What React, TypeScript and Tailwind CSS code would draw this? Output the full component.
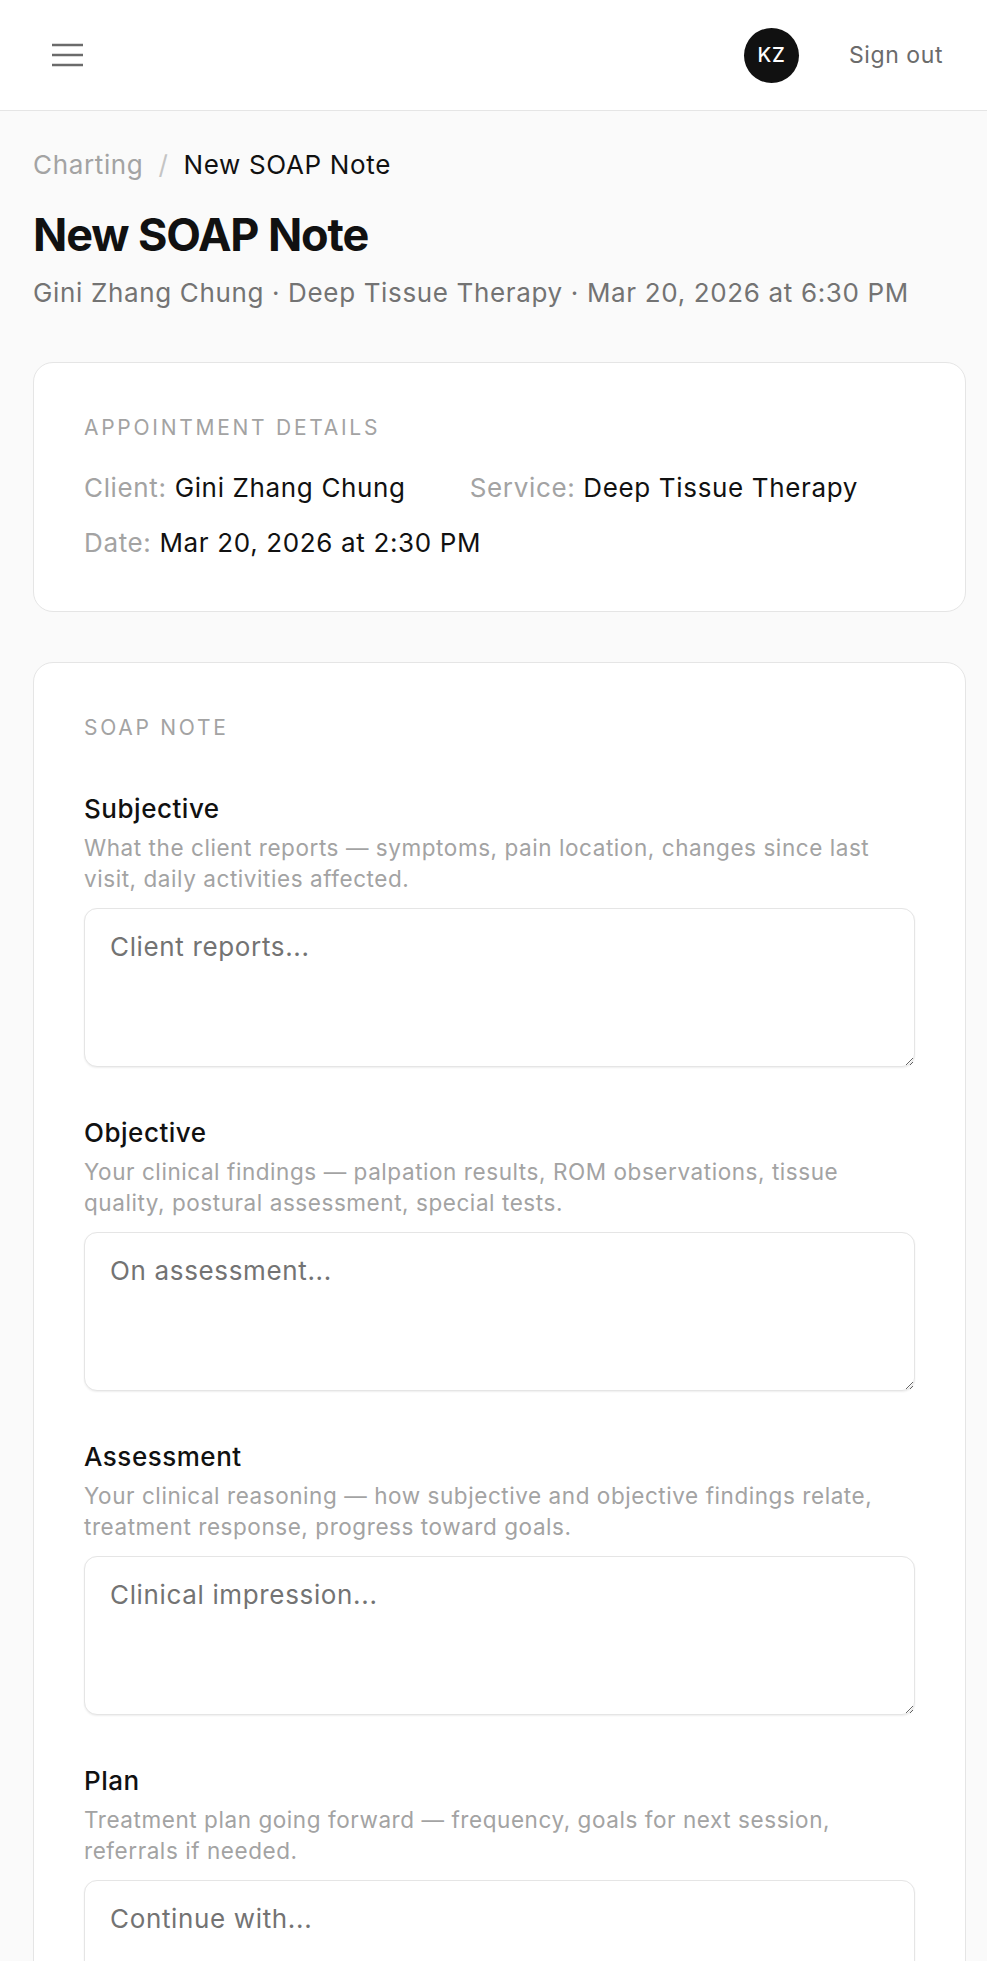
import React from 'react';

const sections = [
  {
    title: 'Subjective',
    hint: 'What the client reports — symptoms, pain location, changes since last visit, daily activities affected.',
    placeholder: 'Client reports...',
  },
  {
    title: 'Objective',
    hint: 'Your clinical findings — palpation results, ROM observations, tissue quality, postural assessment, special tests.',
    placeholder: 'On assessment...',
  },
  {
    title: 'Assessment',
    hint: 'Your clinical reasoning — how subjective and objective findings relate, treatment response, progress toward goals.',
    placeholder: 'Clinical impression...',
  },
  {
    title: 'Plan',
    hint: 'Treatment plan going forward — frequency, goals for next session, referrals if needed.',
    placeholder: 'Continue with...',
  },
];

function MenuIcon() {
  return (
    <svg width="31" height="24" viewBox="0 0 31 24" fill="none" stroke="#6b6b6b" strokeWidth="2.5">
      <path d="M0 2h31M0 12h31M0 22h31" />
    </svg>
  );
}

function Detail({ label, value }: { label: string; value: string }) {
  return (
    <p className="text-[26px] leading-[32px] tracking-[0.025em]">
      <span className="text-[#a3a3a3]">{label}</span>{' '}
      <span className="text-[#111111]">{value}</span>
    </p>
  );
}

export default function App() {
  return (
    <div className="min-h-screen bg-[#fafafa] font-['Inter',sans-serif] antialiased">
      <header className="flex h-[111px] items-center justify-between border-b border-[#e5e5e5] bg-white pl-[52px] pr-[44px]">
        <button className="flex items-center">
          <MenuIcon />
        </button>
        <div className="flex items-center gap-[50px]">
          <div className="flex h-[55px] w-[55px] items-center justify-center rounded-full bg-[#111111] text-[20px] font-medium tracking-[0.03em] text-white">
            KZ
          </div>
          <span className="text-[23px] tracking-[0.025em] text-[#6b6b6b]">Sign out</span>
        </div>
      </header>

      <main className="pl-[33px] pr-[21px] pt-[38px] pb-[60px]">
        <nav className="flex items-center gap-[15px] text-[26px] leading-[32px] tracking-[0.025em]">
          <span className="text-[#a3a3a3]">Charting</span>
          <span className="text-[#c4c4c4]">/</span>
          <span className="text-[#111111]">New SOAP Note</span>
        </nav>
        <h1 className="mt-[27px] text-[45px] font-bold leading-[54px] tracking-[-0.025em] text-[#111111]">
          New SOAP Note
        </h1>
        <p className="mt-[15px] text-[26px] leading-[32px] tracking-[0.025em] text-[#737373]">
          Gini Zhang Chung · Deep Tissue Therapy · Mar 20, 2026 at 6:30 PM
        </p>

        <section className="mt-[53px] rounded-[20px] border border-[#e5e5e5] bg-white px-[50px] pt-[50px] pb-[52px]">
          <h2 className="text-[21px] leading-[30px] tracking-[0.13em] text-[#a3a3a3]">APPOINTMENT DETAILS</h2>
          <div className="mt-[29px] flex flex-wrap gap-x-[64px] gap-y-[23px]">
            <Detail label="Client:" value="Gini Zhang Chung" />
            <Detail label="Service:" value="Deep Tissue Therapy" />
            <Detail label="Date:" value="Mar 20, 2026 at 2:30 PM" />
          </div>
        </section>

        <section className="mt-[50px] rounded-[20px] border border-[#e5e5e5] bg-white px-[50px] pt-[50px] pb-[50px]">
          <h2 className="text-[21px] leading-[30px] tracking-[0.13em] text-[#a3a3a3]">SOAP NOTE</h2>
          <div className="mt-[50px] flex flex-col gap-[50px]">
            {sections.map((s) => (
              <label key={s.title} className="block">
                <span className="block text-[26px] font-medium leading-[32px] tracking-[0.02em] text-[#111111]">
                  {s.title}
                </span>
                <span className="mt-[7px] block text-[22.5px] leading-[31px] tracking-[0.025em] text-[#a3a3a3]">
                  {s.hint}
                </span>
                <textarea
                  placeholder={s.placeholder}
                  className="mt-[14px] block h-[159px] w-full rounded-[13px] border border-[#e5e5e5] bg-white px-[25px] py-[20px] text-[26px] leading-[36px] tracking-[0.025em] text-[#111111] shadow-[0_1px_2px_rgba(0,0,0,0.07)] outline-none placeholder:text-[#737373]"
                />
              </label>
            ))}
          </div>
        </section>
      </main>
    </div>
  );
}
